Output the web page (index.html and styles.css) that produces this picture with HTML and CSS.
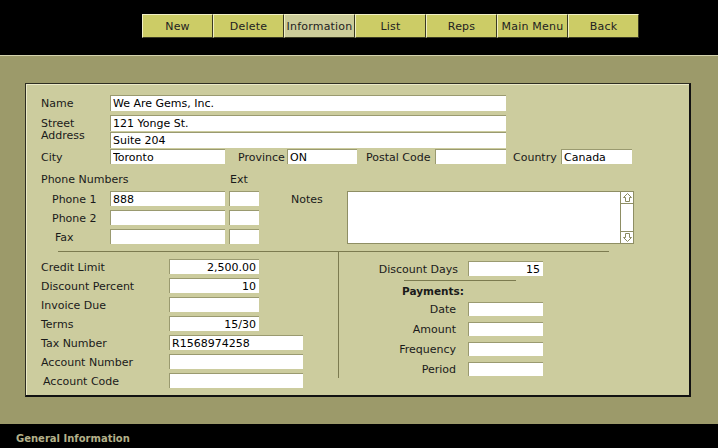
FILE: index.html
```html
<!DOCTYPE html>
<html lang="en">
<head>
<meta charset="utf-8">
<title>General Information</title>
<link rel="stylesheet" href="styles.css">
</head>
<body>
<div class="app">
  <header class="topbar">
    <nav class="toolbar">
      <button class="tb">New</button>
      <button class="tb">Delete</button>
      <button class="tb active">Information</button>
      <button class="tb">List</button>
      <button class="tb">Reps</button>
      <button class="tb">Main Menu</button>
      <button class="tb">Back</button>
    </nav>
  </header>

  <main class="stage">
    <section class="panel">
      <div class="row">
        <span class="lbl w-main">Name</span>
        <input class="fld wide h16" value="We Are Gems, Inc.">
      </div>

      <div class="row row-street">
        <span class="lbl w-main lbl-street">Street<br>Address</span>
        <div class="stack">
          <input class="fld wide h16" value="121 Yonge St.">
          <input class="fld wide h16" value="Suite 204">
        </div>
      </div>

      <div class="row row-city">
        <span class="lbl w-main">City</span>
        <input class="fld w115" value="Toronto">
        <span class="lbl lbl-prov">Province</span>
        <input class="fld w70" value="ON">
        <span class="lbl lbl-postal">Postal Code</span>
        <input class="fld w71" value="">
        <span class="lbl lbl-country">Country</span>
        <input class="fld w71" value="Canada">
      </div>

      <div class="row row-phonehead">
        <span class="lbl lbl-phonehead">Phone Numbers</span>
        <span class="lbl">Ext</span>
      </div>

      <div class="phones">
        <div class="phone-col">
          <div class="row">
            <span class="lbl lbl-phone">Phone 1</span>
            <input class="fld w115" value="888">
            <input class="fld w30 ext" value="">
          </div>
          <div class="row">
            <span class="lbl lbl-phone">Phone 2</span>
            <input class="fld w115" value="">
            <input class="fld w30 ext" value="">
          </div>
          <div class="row">
            <span class="lbl lbl-phone lbl-fax">Fax</span>
            <input class="fld w115" value="">
            <input class="fld w30 ext" value="">
          </div>
        </div>
        <span class="lbl lbl-notes">Notes</span>
        <div class="notes">
          <div class="notes-text"></div>
          <div class="scroll">
            <div class="sbtn sbtn-up">
              <svg width="9" height="9" viewBox="0 0 9 9"><path d="M4.5 0.5 L8.5 4.5 H6.5 V8.5 H2.5 V4.5 H0.5 Z" fill="none" stroke="#8a8a60" stroke-width="1"/></svg>
            </div>
            <div class="strack"></div>
            <div class="sbtn sbtn-down">
              <svg width="9" height="9" viewBox="0 0 9 9"><path d="M4.5 8.5 L8.5 4.5 H6.5 V0.5 H2.5 V4.5 H0.5 Z" fill="none" stroke="#8a8a60" stroke-width="1"/></svg>
            </div>
          </div>
        </div>
      </div>

      <div class="sep"></div>

      <div class="lower">
        <div class="lower-left">
          <div class="row lrow">
            <span class="lbl w-acct">Credit Limit</span>
            <input class="fld w90 num" value="2,500.00">
          </div>
          <div class="row lrow">
            <span class="lbl w-acct">Discount Percent</span>
            <input class="fld w90 num" value="10">
          </div>
          <div class="row lrow">
            <span class="lbl w-acct">Invoice Due</span>
            <input class="fld w90" value="">
          </div>
          <div class="row lrow">
            <span class="lbl w-acct">Terms</span>
            <input class="fld w90 num" value="15/30">
          </div>
          <div class="row lrow">
            <span class="lbl w-acct">Tax Number</span>
            <input class="fld w134" value="R1568974258">
          </div>
          <div class="row lrow">
            <span class="lbl w-acct">Account Number</span>
            <input class="fld w134" value="">
          </div>
          <div class="row lrow">
            <span class="lbl w-acct lbl-code">Account Code</span>
            <input class="fld w134" value="">
          </div>
        </div>

        <div class="vline"></div>

        <div class="lower-right">
          <div class="row">
            <span class="lbl lbl-dd">Discount Days</span>
            <input class="fld w75 num" value="15">
          </div>
          <div class="rule"></div>
          <div class="pay-head">Payments:</div>
          <div class="pay-list">
            <div class="row prow">
              <span class="lbl lbl-pay">Date</span>
              <input class="fld w75 h14" value="">
            </div>
            <div class="row prow">
              <span class="lbl lbl-pay">Amount</span>
              <input class="fld w75 h14" value="">
            </div>
            <div class="row prow">
              <span class="lbl lbl-pay">Frequency</span>
              <input class="fld w75 h14" value="">
            </div>
            <div class="row prow">
              <span class="lbl lbl-pay">Period</span>
              <input class="fld w75 h14" value="">
            </div>
          </div>
        </div>
      </div>
    </section>
  </main>

  <footer class="status">General Information</footer>
</div>
</body>
</html>
```

FILE: styles.css
```css
* {
  box-sizing: border-box;
}

html,
body {
  margin: 0;
  padding: 0;
}

body {
  width: 718px;
  height: 448px;
  overflow: hidden;
  background: #9c9a6a;
  font-family: "DejaVu Sans", Verdana, sans-serif;
  font-size: 11px;
  color: #1a1a1a;
}

.app {
  display: flex;
  flex-direction: column;
  height: 448px;
}

/* ---------- top toolbar ---------- */
.topbar {
  flex: none;
  height: 56px;
  background: #000;
  border-bottom: 1px solid #d4d3ad;
  padding: 14px 0 0 142px;
}

.toolbar {
  display: flex;
}

.tb {
  width: 71px;
  height: 24px;
  margin: 0;
  padding: 1px 0 0 0;
  background: #cccc66;
  border: 1px solid;
  border-color: #f0efc4 #3a3a22 #3a3a22 #f0efc4;
  font: 11px "DejaVu Sans", Verdana, sans-serif;
  letter-spacing: 0.2px;
  color: #222;
  display: flex;
  align-items: center;
  justify-content: center;
}

.tb.active {
  background: #cccc99;
}

/* ---------- main stage ---------- */
.stage {
  flex: 1;
  padding: 27px 0 0 25px;
}

.panel {
  width: 666px;
  height: 314px;
  background: #cccc9e;
  border-style: solid;
  border-width: 1px 2px 2px 1px;
  border-color: #2e2e22 #111 #111 #2e2e22;
  box-shadow: inset 1px 1px 0 #eceac8;
  padding: 11px 0 0 15px;
}

.row {
  display: flex;
  align-items: center;
}

.lbl {
  flex: none;
  white-space: nowrap;
  padding-top: 1px;
}

.fld {
  flex: none;
  height: 15px;
  margin: 0;
  padding: 0 0 0 2px;
  border: 0;
  border-top: 1px solid #9a9a70;
  border-left: 1px solid #9a9a70;
  background: #fff;
  font: 11px "DejaVu Sans", Verdana, sans-serif;
  color: #000;
  outline: none;
}

.num {
  text-align: right;
  padding: 0 3px 0 0;
}

.h16 { height: 16px; }
.h14 { height: 14px; }
.wide { width: 396px; }
.w115 { width: 115px; }
.w70 { width: 70px; }
.w71 { width: 71px; }
.w30 { width: 30px; }
.w90 { width: 90px; }
.w134 { width: 134px; }
.w75 { width: 75px; }

.w-main { width: 69px; }

/* street */
.row-street {
  margin-top: 4px;
  align-items: flex-start;
}

.lbl-street {
  padding-top: 3px;
  line-height: 12px;
}

.stack {
  display: flex;
  flex-direction: column;
  gap: 1px;
}

/* city line */
.row-city {
  margin-top: 1px;
}

.lbl-prov { margin-left: 13px; width: 49px; }
.lbl-postal { margin-left: 9px; width: 69px; }
.lbl-country { margin-left: 7px; width: 48px; }

/* phones */
.row-phonehead {
  margin-top: 8px;
  height: 14px;
  line-height: 14px;
}

.lbl-phonehead { width: 189px; }

.phones {
  margin-top: 5px;
  display: flex;
  align-items: flex-start;
}

.phone-col {
  display: flex;
  flex-direction: column;
  gap: 4px;
}

.lbl-phone {
  width: 69px;
  padding-left: 11px;
}

.lbl-fax { padding-left: 14px; }

.ext { margin-left: 4px; }

.lbl-notes {
  margin-left: 32px;
  width: 56px;
  line-height: 15px;
}

.notes {
  width: 287px;
  height: 53px;
  display: flex;
  background: #fff;
  border: 1px solid #8e8e64;
}

.notes-text {
  flex: 1;
}

.scroll {
  width: 13px;
  display: flex;
  flex-direction: column;
  border-left: 1px solid #8e8e64;
  background: #fff;
}

.sbtn {
  height: 12px;
  display: flex;
  align-items: center;
  justify-content: center;
}

.sbtn-up { border-bottom: 1px solid #8e8e64; }
.sbtn-down { border-top: 1px solid #8e8e64; }

.strack { flex: 1; }

/* separator */
.sep {
  margin: 7px 0 0 17px;
  width: 551px;
  height: 1px;
  background: #7c7b50;
}

/* lower section */
.lower {
  display: flex;
  align-items: flex-start;
}

.lower-left {
  width: 297px;
  padding-top: 7px;
  display: flex;
  flex-direction: column;
  gap: 4px;
}

.w-acct { width: 128px; }
.lbl-code { padding-left: 2px; }

.vline {
  width: 1px;
  height: 126px;
  background: #7c7b50;
}

.lower-right {
  padding-top: 9px;
}

.lbl-dd {
  width: 119px;
  margin-right: 10px;
  text-align: right;
}

.rule {
  margin: 4px 0 0 65px;
  width: 112px;
  height: 1px;
  background: #7c7b50;
}

.pay-head {
  margin: 3px 0 0 63px;
  line-height: 14px;
  font-weight: bold;
  font-size: 10.5px;
}

.pay-list {
  margin-top: 4px;
  display: flex;
  flex-direction: column;
  gap: 6px;
}

.lbl-pay {
  width: 117px;
  margin-right: 12px;
  text-align: right;
}

/* footer */
.status {
  flex: none;
  height: 24px;
  background: #000;
  color: #b4b18a;
  font-weight: bold;
  font-size: 10px;
  line-height: 24px;
  padding: 3px 0 0 16px;
}
```
